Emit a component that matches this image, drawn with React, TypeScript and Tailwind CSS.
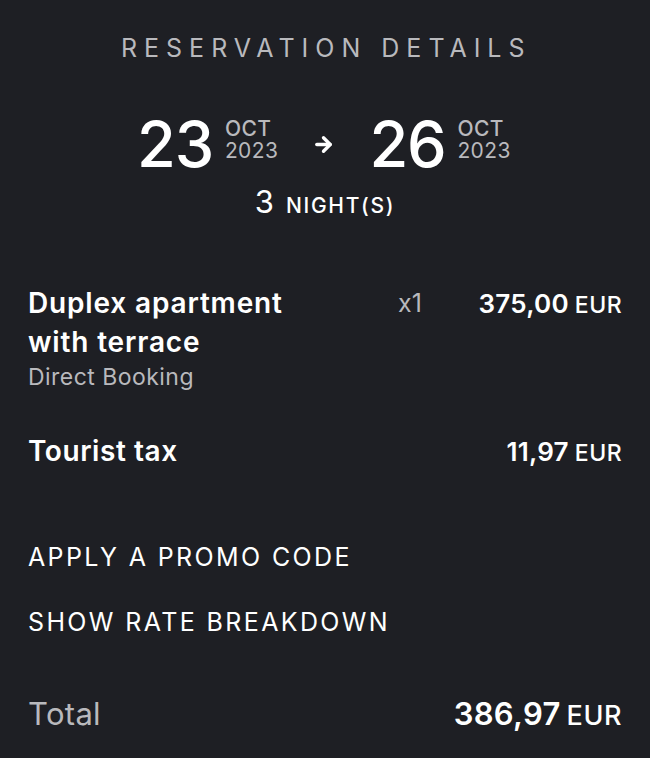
import { ArrowRight } from "lucide-react";

const font = { fontFamily: "Inter, 'Noto Sans', sans-serif" };

function DateBlock({ day, month, year }: { day: string; month: string; year: string }) {
  return (
    <div className="flex items-center gap-[12px]">
      <span className="text-[63px] leading-none font-medium tracking-[-0.02em] text-white">{day}</span>
      <div className="flex flex-col text-[21px] leading-[22px] tracking-[0.02em] text-[#b9b9bd] -mt-[10px]">
        <span className="font-medium">{month}</span>
        <span>{year}</span>
      </div>
    </div>
  );
}

function Price({ amount, size, cur }: { amount: string; size: string; cur: string }) {
  return (
    <div className="flex items-baseline gap-[6px] text-white">
      <span className={`${size} font-semibold tracking-[0.01em]`}>{amount}</span>
      <span className={`${cur} font-medium tracking-[0.02em]`}>EUR</span>
    </div>
  );
}

export default function App() {
  return (
    <div className="min-h-screen bg-[#1e1f24] text-white" style={font}>
      <div className="flex flex-col px-[28px] pt-[31px]">
        <h1 className="text-center text-[25px] leading-[34px] tracking-[0.28em] pl-[0.1em] text-[#b9b9bd] font-normal">
          RESERVATION DETAILS
        </h1>

        <div className="mt-[48px] flex items-center justify-center gap-[34px] pr-[2px]">
          <DateBlock day="23" month="OCT" year="2023" />
          <ArrowRight size={23} strokeWidth={3.5} className="text-white" />
          <DateBlock day="26" month="OCT" year="2023" />
        </div>

        <div className="mt-[10px] flex items-baseline justify-center gap-[12px]">
          <span className="text-[31px] leading-none font-normal">3</span>
          <span className="text-[21px] font-medium tracking-[0.08em]">NIGHT(S)</span>
        </div>

        <div className="mt-[62px] flex items-start">
          <div className="flex-1">
            <p className="text-[28px] leading-[39px] font-semibold tracking-[0.03em]">
              Duplex apartment
              <br />
              with terrace
            </p>
            <p className="text-[23px] leading-[30px] text-[#b9b9bd] tracking-[0.02em]">Direct Booking</p>
          </div>
          <span className="w-[72px] text-[25px] leading-[39px] text-[#b9b9bd]">x1</span>
          <div className="w-[152px] flex justify-end leading-[39px]">
            <Price amount="375,00" size="text-[26px]" cur="text-[23px]" />
          </div>
        </div>

        <div className="mt-[40px] flex items-center justify-between">
          <p className="text-[28px] leading-[39px] font-semibold tracking-[0.02em]">Tourist tax</p>
          <Price amount="11,97" size="text-[26px]" cur="text-[23px]" />
        </div>

        <div className="mt-[69px] flex flex-col gap-[31px] text-[25px] leading-[34px] tracking-[0.095em]">
          <button className="text-left">APPLY A PROMO CODE</button>
          <button className="text-left">SHOW RATE BREAKDOWN</button>
        </div>

        <div className="mt-[52px] flex items-center justify-between">
          <span className="text-[31px] text-[#b9b9bd] tracking-[0.01em]">Total</span>
          <Price amount="386,97" size="text-[31px]" cur="text-[27px]" />
        </div>
      </div>
    </div>
  );
}
